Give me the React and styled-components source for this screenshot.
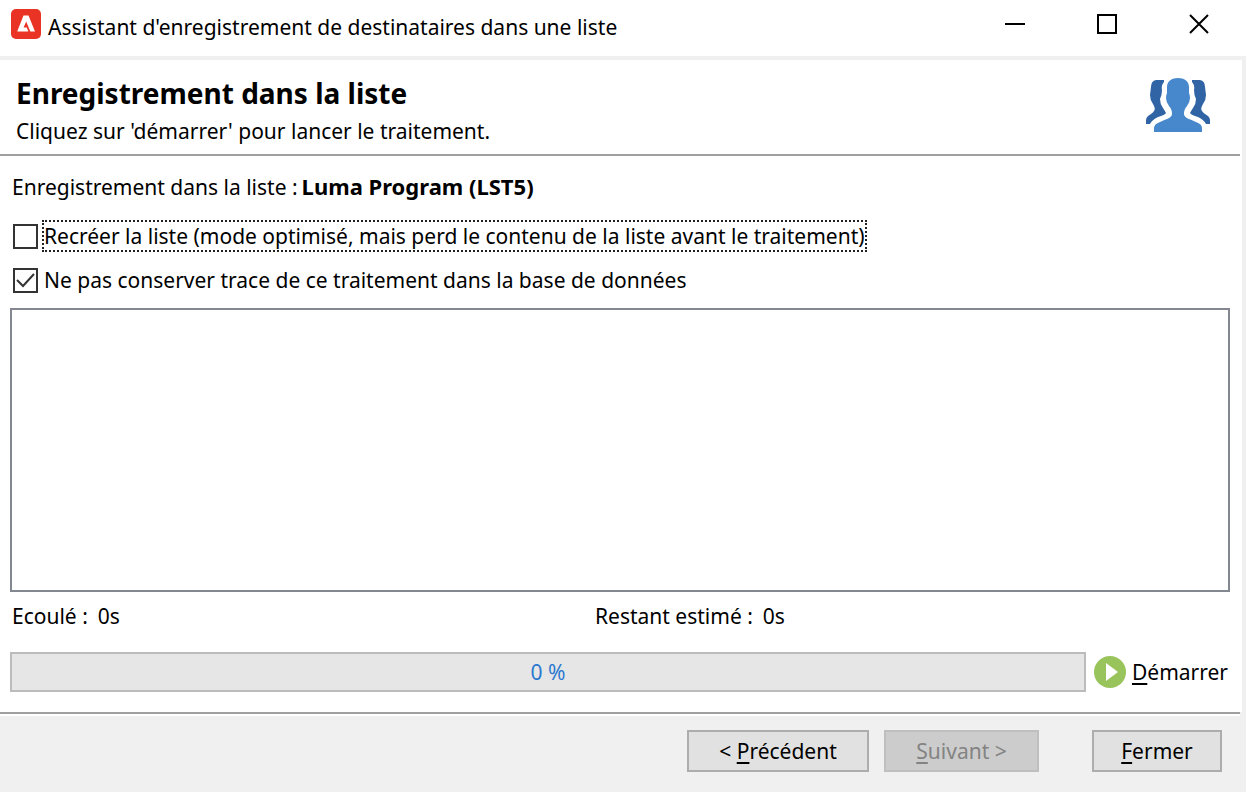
import React from 'react';
import styled, { createGlobalStyle } from 'styled-components';

const GlobalStyle = createGlobalStyle`
  *, *::before, *::after { box-sizing: border-box; }
  body {
    margin: 0;
    background: #f0f0f0;
    color: #000;
    font-family: "Noto Sans", "Open Sans", sans-serif;
    font-size: 21px;
    line-height: 28px;
  }
  button, input, textarea { font: inherit; color: inherit; margin: 0; }
`;

const Window = styled.div`
  min-height: 100vh;
  display: flex;
  flex-direction: column;
`;

const TitleBar = styled.header`
  height: 56px;
  padding: 0 22px 8px 11px;
  display: flex;
  align-items: center;
  gap: 7px;
  background: #fff;
`;

const Title = styled.span`
  flex: 1;
  padding-top: 6px;
  white-space: nowrap;
`;

const WindowControls = styled.div`
  display: flex;
  gap: 42px;
`;

const WindowButton = styled.button`
  width: 50px;
  height: 48px;
  padding: 0;
  border: 0;
  background: none;
  display: grid;
  place-items: center;
`;

const Page = styled.main`
  flex: 1;
  display: flex;
  flex-direction: column;
  margin: 4px 4px 0 0;
  background: #fff;
`;

const Banner = styled.section`
  display: flex;
  justify-content: space-between;
  align-items: flex-start;
  height: 96px;
  margin-right: 2px;
  padding: 14px 30px 0 16px;
  border-bottom: 2px solid #a0a0a0;
  & > svg { margin-top: 4px; }
`;

const Heading = styled.h1`
  margin: 0;
  font-size: 28px;
  line-height: 38px;
  font-weight: 700;
`;

const Subtitle = styled.p`
  margin: 0;
  line-height: 38px;
`;

const Content = styled.div`
  flex: 1;
  display: flex;
  flex-direction: column;
  padding: 16px 12px 20px 10px;
`;

const Target = styled.p`
  display: flex;
  gap: 4px;
  margin: 0 0 18px 2px;
  line-height: 30px;
`;

const ListName = styled.strong`
  font-size: 22px;
  line-height: 28px;
`;

const CheckRow = styled.div`
  display: flex;
  align-items: center;
  gap: 4px;
  height: 32px;
  margin: 0 0 12px 3px;
`;

const CheckBox = styled.span`
  display: grid;
  width: 25px;
  height: 25px;
  & > * { grid-area: 1 / 1; }
  & > svg { pointer-events: none; opacity: 0; }
  & > input:checked + svg { opacity: 1; }
`;

const CheckInput = styled.input`
  appearance: none;
  width: 25px;
  height: 25px;
  border: 2px solid #333;
  background: #fff;
`;

const CheckLabel = styled.label`
  line-height: 28px;
  border: 2px dotted ${(p) => (p.$focused ? '#222' : 'transparent')};
  white-space: nowrap;
`;

const Log = styled.textarea`
  flex: 1;
  min-height: 120px;
  width: 100%;
  border: 2px solid #828790;
  background: #fff;
  resize: none;
  outline: none;
`;

const Times = styled.dl`
  display: grid;
  grid-template-columns: 583px 1fr;
  margin: 8px 0 20px 2px;
  line-height: 32px;
`;

const Time = styled.div`
  display: flex;
  gap: 10px;
  dd { margin: 0; }
`;

const RunRow = styled.div`
  display: flex;
  align-items: center;
  gap: 8px;
`;

const Progress = styled.div`
  flex: 1;
  height: 40px;
  display: grid;
  place-items: center;
  border: 2px solid #bcbcbc;
  background: #e6e6e6;
  color: #2a78d0;
`;

const StartButton = styled.button`
  display: flex;
  align-items: center;
  gap: 6px;
  height: 40px;
  padding: 0 2px 0 0;
  border: 0;
  background: none;
`;

const Footer = styled.footer`
  display: flex;
  justify-content: flex-end;
  gap: 15px;
  padding: 14px 18px 20px;
  margin-right: 6px;
  border-top: 2px solid #a0a0a0;
  box-shadow: inset 0 2px #fff;
`;

const NavButton = styled.button`
  width: ${(p) => p.$width}px;
  height: 42px;
  margin-top: 2px;
  padding: 0;
  border: 2px solid #adadad;
  background: #e1e1e1;
  &:disabled {
    border-color: #bfbfbf;
    background: #ccc;
    color: #838383;
  }
  &:last-child { margin-left: 38px; }
`;

const Key = styled.span`
  text-decoration: underline;
  text-decoration-thickness: 2px;
  text-underline-offset: 3px;
`;

const Logo = () => (
  <svg width="30" height="30" viewBox="0 0 30 30" aria-hidden="true">
    <rect width="30" height="30" rx="5" fill="#e93425" />
    <path d="M12.500 6.500H17.500L24 22.500H19.300L15.200 12.500L12.600 18.500H15.800L17.300 22.500H6.200Z" fill="#fff" />
  </svg>
);

const People = () => (
  <svg width="64" height="54" viewBox="0 0 64 54" aria-hidden="true">
    <g fill="#3164a5">
      <path d="M18 2H10Q5 3 5 9L4 17Q4 22 7 26Q10 31 8 33Q7 35 2 38Q0 40 0 42V46H4Q6 42 12 39Q19 37 20 35Q19 33 17 30Q14 26 14 21Q16 17 16 12Q15 7 18 4Z" />
      <path d="M46 2H54Q59 3 59 9L60 17Q60 22 57 26Q54 31 56 33Q57 35 62 38Q64 40 64 42V46H60Q58 42 52 39Q45 37 44 35Q45 33 47 30Q50 26 50 21Q48 17 48 12Q49 7 46 4Z" />
    </g>
    <path fill="#4788cc" d="M32 0C26 0 21 3 21 9V15Q20 17 20 20Q20 24 23 28Q26 31 26 36C26 40 20 41 14 44Q8 46 8 50V54H56V50Q56 46 50 44C44 41 38 40 38 36Q38 31 41 28Q44 24 44 20Q44 17 43 15V9C43 3 38 0 32 0Z" />
  </svg>
);

export default function App() {
  return (
    <>
      <GlobalStyle />
      <Window>
        <TitleBar>
          <Logo />
          <Title>Assistant d'enregistrement de destinataires dans une liste</Title>
          <WindowControls>
            <WindowButton aria-label="Réduire">
              <svg width="20" height="20"><path d="M0 10H20" stroke="#000" strokeWidth="2" /></svg>
            </WindowButton>
            <WindowButton aria-label="Agrandir">
              <svg width="20" height="20"><path d="M1 1H19V19H1Z" fill="none" stroke="#000" strokeWidth="2" /></svg>
            </WindowButton>
            <WindowButton aria-label="Fermer la fenêtre">
              <svg width="20" height="20"><path d="M1 1L19 19M19 1L1 19" stroke="#000" strokeWidth="2" /></svg>
            </WindowButton>
          </WindowControls>
        </TitleBar>
        <Page>
          <Banner>
            <div>
              <Heading>Enregistrement dans la liste</Heading>
              <Subtitle>Cliquez sur 'démarrer' pour lancer le traitement.</Subtitle>
            </div>
            <People />
          </Banner>
          <Content>
            <Target>
              <span>Enregistrement dans la liste :</span>
              <ListName>Luma Program (LST5)</ListName>
            </Target>
            <CheckRow>
              <CheckBox>
                <CheckInput type="checkbox" id="recreate" />
                <svg width="25" height="25"><path d="M4 12L10 18L21 6" fill="none" stroke="#333" strokeWidth="2" /></svg>
              </CheckBox>
              <CheckLabel htmlFor="recreate" $focused>
                Recréer la liste (mode optimisé, mais perd le contenu de la liste avant le traitement)
              </CheckLabel>
            </CheckRow>
            <CheckRow>
              <CheckBox>
                <CheckInput type="checkbox" id="notrace" defaultChecked />
                <svg width="25" height="25"><path d="M4 12L10 18L21 6" fill="none" stroke="#333" strokeWidth="2" /></svg>
              </CheckBox>
              <CheckLabel htmlFor="notrace">
                Ne pas conserver trace de ce traitement dans la base de données
              </CheckLabel>
            </CheckRow>
            <Log readOnly aria-label="Journal" />
            <Times>
              <Time><dt>Ecoulé :</dt><dd>0s</dd></Time>
              <Time><dt>Restant estimé :</dt><dd>0s</dd></Time>
            </Times>
            <RunRow>
              <Progress role="progressbar" aria-valuenow={0} aria-label="Progression">0 %</Progress>
              <StartButton>
                <svg width="32" height="32" aria-hidden="true">
                  <circle cx="16" cy="16" r="16" fill="#98c45b" />
                  <path d="M12 7L24 16L12 25Z" fill="#fff" />
                </svg>
                <span><Key>D</Key>émarrer</span>
              </StartButton>
            </RunRow>
          </Content>
        </Page>
        <Footer>
          <NavButton $width={182}>&lt; <Key>P</Key>récédent</NavButton>
          <NavButton $width={155} disabled><Key>S</Key>uivant &gt;</NavButton>
          <NavButton $width={130}><Key>F</Key>ermer</NavButton>
        </Footer>
      </Window>
    </>
  );
}
